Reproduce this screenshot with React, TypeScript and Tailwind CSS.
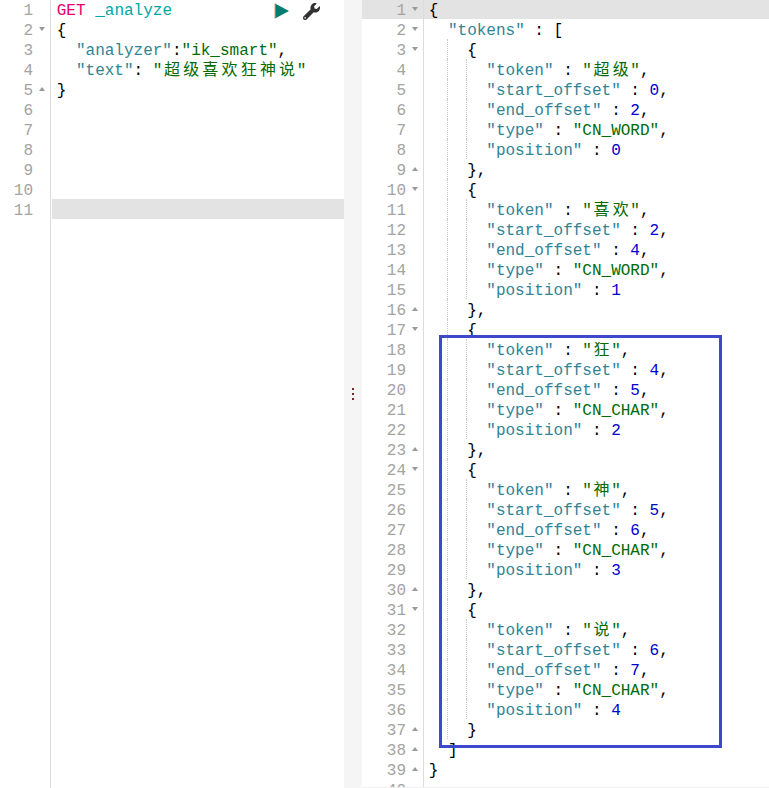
import { FaWrench } from "react-icons/fa";

type Tok = { t: string; c: string };

const KEY = "text-[#318495]";
const STR = "text-[#036a07]";
const NUM = "text-[#0000cd]";
const PUN = "text-black";

const key = (t: string): Tok => ({ t, c: KEY });
const str = (t: string): Tok => ({ t, c: STR });
const num = (t: string): Tok => ({ t, c: NUM });
const pun = (t: string): Tok => ({ t, c: PUN });

type Line = { indent: number; toks: Tok[] };

const tokens = [
  { token: "超级", start: 0, end: 2, type: "CN_WORD", pos: 0 },
  { token: "喜欢", start: 2, end: 4, type: "CN_WORD", pos: 1 },
  { token: "狂", start: 4, end: 5, type: "CN_CHAR", pos: 2 },
  { token: "神", start: 5, end: 6, type: "CN_CHAR", pos: 3 },
  { token: "说", start: 6, end: 7, type: "CN_CHAR", pos: 4 },
];

const rightLines: Line[] = [
  { indent: 0, toks: [pun("{")] },
  { indent: 1, toks: [key('"tokens"'), pun(" : [")] },
];
tokens.forEach((item, i) => {
  rightLines.push({ indent: 2, toks: [pun("{")] });
  rightLines.push({ indent: 3, toks: [key('"token"'), pun(" : "), str(`"${item.token}"`), pun(",")] });
  rightLines.push({ indent: 3, toks: [key('"start_offset"'), pun(" : "), num(String(item.start)), pun(",")] });
  rightLines.push({ indent: 3, toks: [key('"end_offset"'), pun(" : "), num(String(item.end)), pun(",")] });
  rightLines.push({ indent: 3, toks: [key('"type"'), pun(" : "), str(`"${item.type}"`), pun(",")] });
  rightLines.push({ indent: 3, toks: [key('"position"'), pun(" : "), num(String(item.pos))] });
  rightLines.push({ indent: 2, toks: [pun(i < tokens.length - 1 ? "}," : "}")] });
});
rightLines.push({ indent: 1, toks: [pun("]")] });
rightLines.push({ indent: 0, toks: [pun("}")] });
rightLines.push({ indent: 0, toks: [] });

const leftLines: Line[] = [
  { indent: 0, toks: [{ t: "GET", c: "text-[#e6006e]" }, pun(" "), { t: "_analyze", c: "text-[#00a6a6]" }] },
  { indent: 0, toks: [pun("{")] },
  { indent: 1, toks: [key('"analyzer"'), pun(":"), str('"ik_smart"'), pun(",")] },
  { indent: 1, toks: [key('"text"'), pun(": "), str('"超级喜欢狂神说"')] },
  { indent: 0, toks: [pun("}")] },
  { indent: 0, toks: [] },
  { indent: 0, toks: [] },
  { indent: 0, toks: [] },
  { indent: 0, toks: [] },
  { indent: 0, toks: [] },
  { indent: 0, toks: [] },
];

const rightFolds: Record<number, "down" | "up"> = {
  1: "down", 2: "down", 3: "down", 9: "up", 10: "down", 16: "up", 17: "down", 23: "up",
  24: "down", 30: "up", 31: "down", 37: "up", 38: "up", 39: "up",
};
const leftFolds: Record<number, "down" | "up"> = { 2: "down", 5: "up" };

function Fold({ dir }: { dir?: "down" | "up" }) {
  return (
    <span className="w-[6px] h-5 flex items-center justify-center shrink-0">
      {dir && (
        <svg width="6" height="4" viewBox="0 0 6 4">
          <polygon points={dir === "down" ? "0,0 6,0 3,4" : "0,4 6,4 3,0"} fill="#999999" />
        </svg>
      )}
    </span>
  );
}

// wide characters take two cells in the editor grid
function Text({ t }: { t: string }) {
  const parts = t.split(/([\u4e00-\u9fff])/).filter(Boolean);
  return (
    <>
      {parts.map((p, i) =>
        /[\u4e00-\u9fff]/.test(p) ? (
          <span key={i} className="inline-block w-[19.2px] text-center">{p}</span>
        ) : (
          <span key={i}>{p}</span>
        )
      )}
    </>
  );
}

function CodeRow({ line }: { line: Line }) {
  return (
    <div className="h-5 flex items-start whitespace-pre">
      {Array.from({ length: line.indent }).map((_, i) => (
        <span
          key={i}
          className={i === 0 ? "w-[19.2px] h-5 shrink-0" : "w-[19.2px] h-5 shrink-0 border-l border-dotted border-[#c8c8c8]"}
        />
      ))}
      <span className="ml-[0.75px]">
        {line.toks.map((tok, i) => (
          <span key={i} className={tok.c}>
            <Text t={tok.t} />
          </span>
        ))}
      </span>
    </div>
  );
}

export default function App() {
  return (
    <div className="relative w-[769px] h-[788px] overflow-hidden bg-white flex font-['Liberation_Mono','Noto_Sans_CJK_SC',monospace] text-[16px] leading-6">
      {/* request pane */}
      <div className="relative w-[344px] shrink-0 flex">
        <div className="w-[50px] shrink-0 -mt-px text-[#a3a3a3]">
          {leftLines.map((_, i) => (
            <div key={i} className="h-5 flex items-start">
              <span className="w-[33px] text-right">{i + 1}</span>
              <span className="w-[6px]" />
              <Fold dir={leftFolds[i + 1]} />
            </div>
          ))}
        </div>
        <div className="w-px shrink-0 bg-[#dcdcdc]" />
        <div className="flex-1 -mt-px pl-[1px]">
          {leftLines.map((line, i) => (
            <div key={i} className={i === 10 ? "bg-[#e3e3e3] pl-1" : "pl-1"}>
              <CodeRow line={line} />
            </div>
          ))}
        </div>
        <div className="absolute left-[274px] top-[3px] flex items-start gap-[13px]">
          <svg width="16" height="16" viewBox="0 0 16 16">
            <polygon points="1,0.5 15,8 1,15.5" fill="#017d73" />
            <rect x="0.5" y="0.5" width="1" height="15" fill="#d9a066" />
          </svg>
          <FaWrench className="text-[17px] text-[#333333]" />
        </div>
      </div>

      {/* splitter */}
      <div className="w-[18px] shrink-0 bg-[#f5f5f5] flex flex-col items-center justify-center gap-[3px]">
        <span className="w-[2px] h-[2px] bg-[#6b2f2f]" />
        <span className="w-[2px] h-[2px] bg-[#6b2f2f]" />
        <span className="w-[2px] h-[2px] bg-[#6b2f2f]" />
      </div>

      {/* response pane */}
      <div className="flex-1 flex flex-col min-w-0">
        <div className="flex-1 flex overflow-hidden">
          <div className="w-[61px] shrink-0 -mt-px text-[#a3a3a3]">
            {rightLines.map((_, i) => (
              <div key={i} className={i === 0 ? "h-5 flex items-start bg-[#e3e3e3]" : "h-5 flex items-start"}>
                <span className="w-[44px] text-right">{i + 1}</span>
                <span className="w-[6px]" />
                <Fold dir={rightFolds[i + 1]} />
              </div>
            ))}
          </div>
          <div className="w-px shrink-0 bg-[#dcdcdc]" />
          <div className="flex-1 -mt-px">
            {rightLines.map((line, i) => (
              <div key={i} className={i === 0 ? "bg-[#e3e3e3] pl-1" : "pl-1"}>
                <CodeRow line={line} />
              </div>
            ))}
          </div>
        </div>
        <div className="h-px shrink-0 bg-[#f0f0f0]" />
      </div>

      {/* hand-drawn highlight on the screenshot */}
      <div className="absolute left-[439px] top-[335px] w-[283px] h-[413px] border-[3px] border-[#3f48cc] pointer-events-none" />
    </div>
  );
}
